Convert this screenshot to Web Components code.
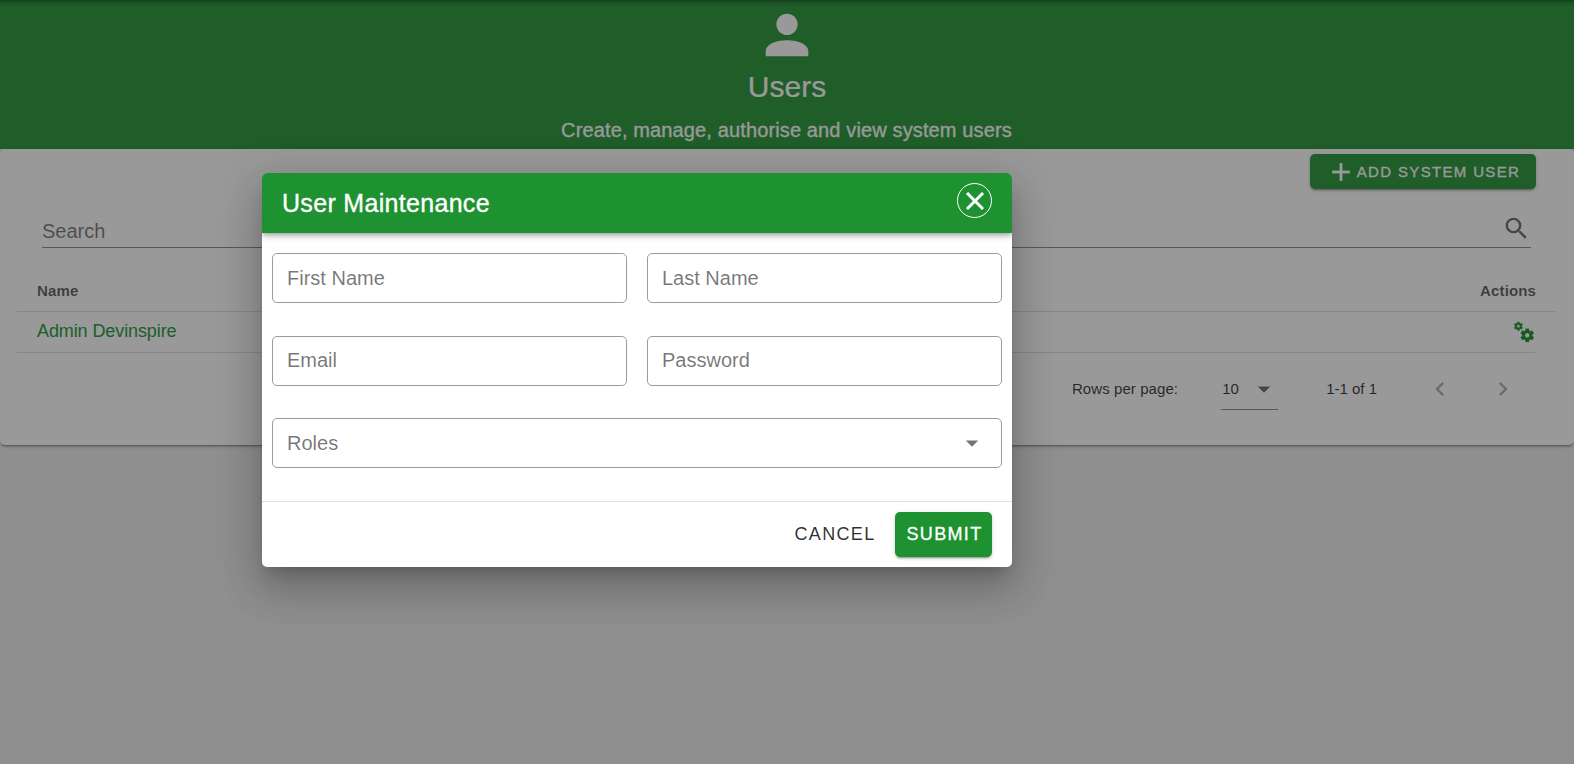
<!DOCTYPE html>
<html lang="en">
<head>
<meta charset="utf-8">
<title>Users</title>
<style>
html,body{margin:0;height:100%}
body{background:#eee;font-family:"Liberation Sans",Arial,sans-serif;overflow:hidden;color:rgba(0,0,0,.87)}
</style>
</head>
<body>
<users-page></users-page>
<script>
const ICONS = {
  account: 'M12,4A4,4 0 0,1 16,8A4,4 0 0,1 12,12A4,4 0 0,1 8,8A4,4 0 0,1 12,4M12,14C16.42,14 20,15.79 20,18V20H4V18C4,15.79 7.58,14 12,14Z',
  plus: 'M19,13H13V19H11V13H5V11H11V5H13V11H19V13Z',
  close: 'M19,6.41L17.59,5L12,10.59L6.41,5L5,6.41L10.59,12L5,17.59L6.41,19L12,13.41L17.59,19L19,17.59L13.41,12L19,6.41Z',
  menuDown: 'M7,10L12,15L17,10H7Z',
  left: 'M15.41,16.58L10.83,12L15.41,7.41L14,6L8,12L14,18L15.41,16.58Z',
  right: 'M8.59,16.58L13.17,12L8.59,7.41L10,6L16,12L10,18L8.59,16.58Z',
  magnify: 'M9.5,3A6.5,6.5 0 0,1 16,9.5C16,11.11 15.41,12.59 14.44,13.73L14.71,14H15.5L20.5,19L19,20.5L14,15.5V14.71L13.73,14.44C12.59,15.41 11.11,16 9.5,16A6.5,6.5 0 0,1 3,9.5A6.5,6.5 0 0,1 9.5,3M9.5,5C7,5 5,7 5,9.5C5,12 7,14 9.5,14C12,14 14,12 14,9.5C14,7 12,5 9.5,5Z',
  cogs: 'M15.9,18.45C17.25,18.45 18.35,17.35 18.35,16C18.35,14.65 17.25,13.55 15.9,13.55C14.54,13.55 13.45,14.65 13.45,16C13.45,17.35 14.54,18.45 15.9,18.45M21.1,16.68L22.58,17.84C22.71,17.95 22.75,18.13 22.66,18.29L21.26,20.71C21.17,20.86 21,20.92 20.83,20.86L19.09,20.16C18.73,20.44 18.33,20.67 17.91,20.85L17.64,22.7C17.62,22.87 17.47,23 17.3,23H14.5C14.32,23 14.18,22.87 14.15,22.7L13.89,20.85C13.46,20.67 13.07,20.44 12.71,20.16L10.96,20.86C10.81,20.92 10.62,20.86 10.54,20.71L9.14,18.29C9.05,18.13 9.09,17.95 9.22,17.84L10.7,16.68L10.65,16L10.7,15.31L9.22,14.16C9.09,14.05 9.05,13.86 9.14,13.71L10.54,11.29C10.62,11.13 10.81,11.07 10.96,11.13L12.71,11.84C13.07,11.56 13.46,11.32 13.89,11.15L14.15,9.29C14.18,9.13 14.32,9 14.5,9H17.3C17.47,9 17.62,9.13 17.64,9.29L17.91,11.15C18.33,11.32 18.73,11.56 19.09,11.84L20.83,11.13C21,11.07 21.17,11.13 21.26,11.29L22.66,13.71C22.75,13.86 22.71,14.05 22.58,14.16L21.1,15.31L21.15,16L21.1,16.68M6.69,8.07C7.56,8.07 8.26,7.37 8.26,6.5C8.26,5.63 7.56,4.92 6.69,4.92C5.82,4.92 5.13,5.63 5.13,6.5C5.13,7.37 5.82,8.07 6.69,8.07M10.03,6.94L11,7.68C11.07,7.75 11.09,7.87 11.03,7.97L10.13,9.53C10.08,9.63 9.96,9.67 9.86,9.63L8.74,9.18L8,9.62L7.81,10.81C7.79,10.92 7.7,11 7.59,11H5.79C5.67,11 5.58,10.92 5.56,10.81L5.4,9.62L4.64,9.18L3.52,9.63C3.41,9.67 3.3,9.63 3.24,9.53L2.34,7.97C2.28,7.87 2.31,7.75 2.39,7.68L3.34,6.94L3.31,6.5L3.34,6.06L2.39,5.32C2.31,5.25 2.28,5.13 2.34,5.03L3.24,3.47C3.3,3.37 3.41,3.33 3.52,3.38L4.63,3.82L5.4,3.38L5.56,2.19C5.58,2.08 5.67,2 5.79,2H7.59C7.7,2 7.79,2.08 7.81,2.19L8,3.38L8.74,3.82L9.86,3.38C9.96,3.33 10.08,3.37 10.13,3.47L11.03,5.03C11.09,5.13 11.07,5.25 11,5.32L10.03,6.06L10.06,6.5L10.03,6.94Z'
};

function define(name, html) {
  const t = document.createElement('template');
  t.innerHTML = html;
  customElements.define(name, class extends HTMLElement {
    constructor() {
      super();
      this.attachShadow({ mode: 'open' }).append(t.content.cloneNode(true));
    }
  });
}

customElements.define('mdi-icon', class extends HTMLElement {
  connectedCallback() {
    if (this.shadowRoot) return;
    const size = this.getAttribute('size') || 24;
    this.attachShadow({ mode: 'open' }).innerHTML =
      `<style>:host{display:block;flex:none;width:${size}px;height:${size}px}svg{display:block;fill:currentColor;stroke:currentColor;stroke-width:var(--icon-stroke,0)}</style>
       <svg width="${size}" height="${size}" viewBox="0 0 24 24"><path d="${ICONS[this.getAttribute('name')]}"/></svg>`;
  }
});

define('page-hero', `<style>
:host{display:flex;flex-direction:column;align-items:center;box-sizing:border-box;height:149px;padding-top:2.5px;
 background:linear-gradient(rgba(0,0,0,.3),rgba(0,0,0,.1) 3px,rgba(0,0,0,0) 7px),#349c45;color:#fff}
h1{margin:0 0 8.5px;font:400 30px/40px "Liberation Sans",Arial,sans-serif;-webkit-text-stroke:.2px}
p{margin:0;padding-right:1px;font-size:20px;line-height:30px;letter-spacing:.13px;-webkit-text-stroke:.3px}
</style><mdi-icon name="account" size="64"></mdi-icon><h1><slot name="title"></slot></h1><p><slot></slot></p>`);

define('app-button', `<style>
:host{display:flex;align-items:center;justify-content:center;box-sizing:border-box;border-radius:5px;text-transform:uppercase;
 letter-spacing:.0893em;white-space:nowrap}
:host([raised]){color:#fff;background:var(--button-color,#1e9130);-webkit-text-stroke:.3px;
 box-shadow:0 3px 1px -2px rgba(0,0,0,.2),0 2px 2px rgba(0,0,0,.14),0 1px 5px rgba(0,0,0,.12)}
</style><slot></slot>`);

define('search-field', `<style>
:host{display:flex;justify-content:space-between;box-sizing:border-box;height:38px;border-bottom:1px solid rgba(0,0,0,.42);color:rgba(0,0,0,.5);
 font-size:20px;line-height:42px}
mdi-icon{margin:4px 0 0 0;color:rgba(0,0,0,.54)}
</style><slot></slot><mdi-icon name="magnify" size="29"></mdi-icon>`);

define('user-table', `<style>
:host{display:block}
.row{display:flex;justify-content:space-between;box-sizing:border-box;margin-left:17px;padding-left:20px;border-bottom:1px solid rgba(0,0,0,.12)}
.head{height:41px;margin-right:18px;padding-right:20px;font-size:15px;line-height:40px;font-weight:700;letter-spacing:.13px;color:rgba(0,0,0,.6)}
.item{height:41px;margin-right:39px;font-size:18px;line-height:39px;letter-spacing:-.1px;color:#2f9e41}
mdi-icon{margin-top:8px;color:#2a973b;--icon-stroke:.3}
</style>
<div class="row head"><span>Name</span><span>Actions</span></div>
<div class="row item"><slot></slot><mdi-icon name="cogs" size="23"></mdi-icon></div>`);

define('table-pager', `<style>
:host{display:flex;justify-content:flex-end;align-items:flex-start;font-size:15px;line-height:20px;padding:26px 57px 0 0;color:rgba(0,0,0,.76)}
.label{letter-spacing:.08px}
.size{display:flex;justify-content:space-between;box-sizing:border-box;width:57px;height:31px;margin:0 48px 0 43px;padding-left:1px;
 border-bottom:1px solid rgba(0,0,0,.42)}
.size mdi-icon{margin:-5px -1px 0 0;color:rgba(0,0,0,.54)}
.nav{margin:-4px 0 0;color:rgba(0,0,0,.3)}
.prev{margin-left:49px;margin-right:35px}
</style>
<span class="label">Rows per page:</span>
<div class="size"><span>10</span><mdi-icon name="menuDown" size="30"></mdi-icon></div>
<span>1-1 of 1</span>
<mdi-icon class="nav prev" name="left" size="28"></mdi-icon>
<mdi-icon class="nav" name="right" size="28"></mdi-icon>`);

define('users-card', `<style>
:host{display:block;box-sizing:border-box;height:296px;padding-top:5px;border-radius:5px;background:#fff;
 box-shadow:0 3px 1px -2px rgba(0,0,0,.2),0 2px 2px rgba(0,0,0,.14),0 1px 5px rgba(0,0,0,.12)}
.bar{display:flex;justify-content:flex-end;padding-right:38px}
app-button{--button-color:#349c45;width:226px;height:35px;font-size:15px}
app-button mdi-icon{margin:0 1px 0 0;--icon-stroke:.25}
search-field{margin:21px 43px 23px 42px}
</style>
<div class="bar"><app-button raised><mdi-icon name="plus" size="30"></mdi-icon>Add System User</app-button></div>
<search-field>Search</search-field>
<user-table>Admin Devinspire</user-table>
<table-pager></table-pager>`);

define('outlined-field', `<style>
:host{display:flex;justify-content:space-between;align-items:center;box-sizing:border-box;height:50px;padding:0 14px;border:1px solid #9b9b9b;
 border-radius:5px;font-size:20px;line-height:48px;color:rgba(0,0,0,.54)}
:host([wide]){grid-column:1 / -1}
</style><slot></slot><slot name="append"></slot>`);

define('dialog-window', `<style>
:host{display:flex;flex-direction:column;width:750px;height:394px;border-radius:5px;background:#fff;overflow:hidden;
 box-shadow:0 11px 15px -7px rgba(0,0,0,.2),0 24px 38px 3px rgba(0,0,0,.14),0 9px 46px 8px rgba(0,0,0,.12)}
header{display:flex;justify-content:space-between;box-sizing:border-box;height:60px;padding:10px 20px;background:#1e9130;color:#fff;
 font-size:25px;line-height:41px;letter-spacing:.0125em;-webkit-text-stroke:.35px;
 box-shadow:0 2px 4px -1px rgba(0,0,0,.2),0 4px 5px rgba(0,0,0,.14),0 1px 10px rgba(0,0,0,.12)}
.close{display:flex;align-items:center;justify-content:center;box-sizing:border-box;width:35px;height:35px;border:1px solid #fff;border-radius:50%;--icon-stroke:.45}
main{display:grid;grid-template-columns:1fr 1fr;column-gap:20px;row-gap:33px;align-content:start;box-sizing:border-box;height:268px;padding:20px 10px 0}
footer{display:flex;justify-content:flex-end;gap:8px;padding:10px 20px;border-top:1px solid #e0e0e0;font-size:18px}
</style>
<header><slot name="title"></slot><div class="close"><mdi-icon name="close" size="30"></mdi-icon></div></header>
<main><slot></slot></main>
<footer><slot name="actions"></slot></footer>`);

define('user-dialog', `<style>
:host{display:block}
outlined-field mdi-icon{color:#757575}
.short{line-height:46px;padding-bottom:2px}
.roles{margin-top:-1px}
app-button{height:45px;letter-spacing:1.35px}
.cancel{width:104px;color:rgba(0,0,0,.82)}
.submit{width:97px;padding-left:2px}
</style>
<dialog-window>
 <span slot="title">User Maintenance</span>
 <outlined-field>First Name</outlined-field>
 <outlined-field>Last Name</outlined-field>
 <outlined-field class="short">Email</outlined-field>
 <outlined-field class="short">Password</outlined-field>
 <outlined-field class="roles" wide>Roles<mdi-icon slot="append" name="menuDown" size="30"></mdi-icon></outlined-field>
 <app-button slot="actions" class="cancel">Cancel</app-button>
 <app-button slot="actions" class="submit" raised>Submit</app-button>
</dialog-window>`);

define('users-page', `<style>
:host{display:block;position:relative;height:764px}
.overlay{position:absolute;inset:0;box-sizing:border-box;padding:173px 0 0 262px;background:rgba(0,0,0,.4)}
</style>
<page-hero><span slot="title">Users</span>Create, manage, authorise and view system users</page-hero>
<users-card></users-card>
<div class="overlay"><user-dialog></user-dialog></div>`);
</script>
</body>
</html>
